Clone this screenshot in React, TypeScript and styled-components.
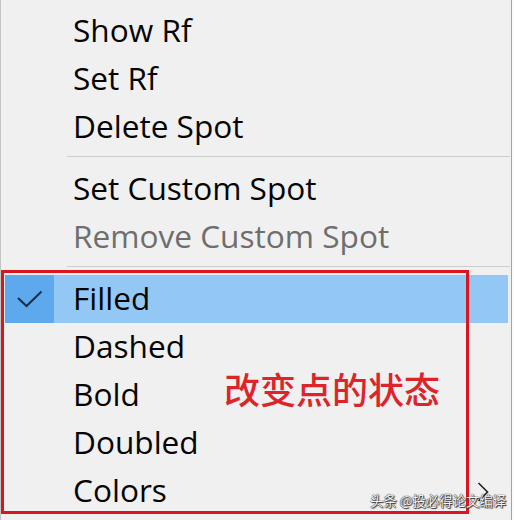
import React from "react";
import styled, { createGlobalStyle } from "styled-components";

const GlobalStyle = createGlobalStyle`
	body {
		margin: 0;
		background: #fbfbfb;
		font-family: "Open Sans", "Noto Sans", sans-serif;
	}
`;

const Page = styled.div`
	position: relative;
	width: 514px;
	height: 520px;
	overflow: hidden;
`;

const Menu = styled.ul`
	box-sizing: border-box;
	width: 512px;
	height: 520px;
	margin: 0;
	padding: 7px 0 0;
	list-style: none;
	background: #f0f0f0;
	border-left: 1px solid #c4c4c4;
	border-right: 1px solid #a3a3a3;
`;

const Item = styled.li<{ $selected?: boolean; $disabled?: boolean }>`
	display: flex;
	align-items: center;
	height: 48px;
	margin: 0 3px 0 4px;
	background: ${p => (p.$selected ? "#93c8f5" : "transparent")};
	color: ${p => (p.$disabled ? "#6e6e6e" : "#050505")};
	font-size: 31.6px;
	line-height: 44px;
	padding-bottom: 3px;
	box-sizing: border-box;
`;

const CheckCell = styled.span<{ $on?: boolean }>`
	display: flex;
	align-items: center;
	justify-content: center;
	align-self: stretch;
	width: 49px;
	margin-bottom: -3px;
	margin-right: 19px;
	background: ${p => (p.$on ? "#5ea9ee" : "transparent")};
`;

const Label = styled.span`
	white-space: nowrap;
`;

const Arrow = styled.span`
	display: flex;
	margin-left: auto;
	margin-right: 19px;
	margin-bottom: -5px;
`;

const Separator = styled.li`
	height: 1px;
	margin: 5px 1px 8px 66px;
	background: #cdcdcd;
`;

const RedFrame = styled.div`
	position: absolute;
	left: 1px;
	top: 270px;
	width: 468px;
	height: 244px;
	box-sizing: border-box;
	border: 3.5px solid #d9161f;
	pointer-events: none;
`;

const Note = styled.div`
	position: absolute;
	left: 224px;
	top: 366px;
	font-family: "Noto Sans CJK SC", sans-serif;
	font-size: 36px;
	font-weight: 500;
	line-height: 44px;
	color: #dc252b;
`;

const Watermark = styled.div`
	position: absolute;
	left: 370px;
	top: 491px;
	font-family: "Noto Sans CJK SC", sans-serif;
	font-size: 13.4px;
	line-height: 18px;
	color: #f4f4f4;
	text-shadow: 0 0 1px #222, 0 0 1px #222, 1px 1px 1px #333;
`;

type Entry =
	| { kind: "sep" }
	| { kind: "item"; label: string; disabled?: boolean; checked?: boolean; submenu?: boolean };

const entries: Entry[] = [
	{ kind: "item", label: "Show Rf" },
	{ kind: "item", label: "Set Rf" },
	{ kind: "item", label: "Delete Spot" },
	{ kind: "sep" },
	{ kind: "item", label: "Set Custom Spot" },
	{ kind: "item", label: "Remove Custom Spot", disabled: true },
	{ kind: "sep" },
	{ kind: "item", label: "Filled", checked: true },
	{ kind: "item", label: "Dashed" },
	{ kind: "item", label: "Bold" },
	{ kind: "item", label: "Doubled" },
	{ kind: "item", label: "Colors", submenu: true },
];

function CheckMark() {
	return (
		<svg width="26" height="18" viewBox="0 0 26 18">
			<path d="M1 8 L9.5 16 L24.5 1.5" fill="none" stroke="#1b2b45" strokeWidth="2" />
		</svg>
	);
}

function Chevron() {
	return (
		<svg width="12" height="20" viewBox="0 0 12 20">
			<path d="M1.5 1 L10.5 10 L1.5 19" fill="none" stroke="#222" strokeWidth="1.6" />
		</svg>
	);
}

export default function App() {
	return (
		<Page>
			<GlobalStyle />
			<Menu>
				{entries.map((e, i) =>
					e.kind === "sep" ? (
						<Separator key={i} />
					) : (
						<Item key={i} $selected={e.checked} $disabled={e.disabled}>
							<CheckCell $on={e.checked}>{e.checked && <CheckMark />}</CheckCell>
							<Label>{e.label}</Label>
							{e.submenu && (
								<Arrow>
									<Chevron />
								</Arrow>
							)}
						</Item>
					)
				)}
			</Menu>
			<RedFrame />
			<Note>改变点的状态</Note>
			<Watermark>头条 @投必得论文编译</Watermark>
		</Page>
	);
}
